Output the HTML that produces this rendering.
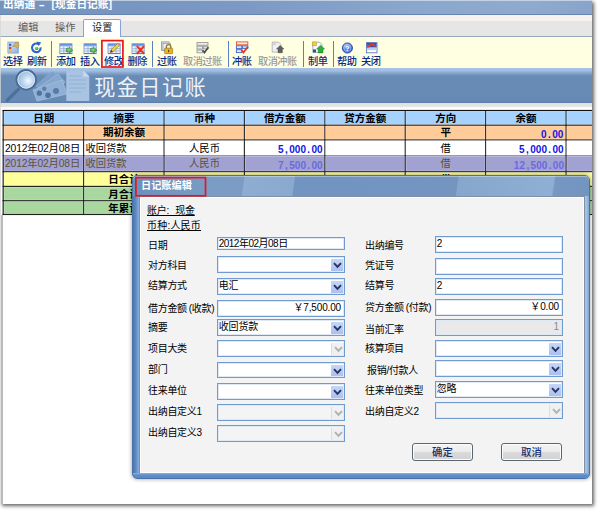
<!DOCTYPE html>
<html lang="zh-CN">
<head>
<meta charset="utf-8">
<title>出纳通 - [现金日记账]</title>
<style>
*{box-sizing:border-box;margin:0;padding:0}
html,body{width:600px;height:512px;background:#fff;overflow:hidden}
body{position:relative;font-family:"Liberation Sans","Noto Sans CJK SC",sans-serif;font-size:10.7px;color:#000;line-height:1}
.abs{position:absolute}
#app{position:absolute;left:0;top:0;width:592px;height:503.5px;background:#fff;overflow:hidden;box-shadow:2px 2px 3.5px rgba(0,0,0,.6)}
#edgeL{left:0;top:15px;width:1.2px;height:489px;background:rgba(215,215,215,.75)}
#edgeL2{left:1px;top:215px;width:2px;height:289px;background:linear-gradient(90deg,#c4c4c4,#aeaeae 50%,#c8c8c8)}
#title{left:0;top:0;width:593px;height:15px;background:linear-gradient(90deg,#7493bd 0%,#7b99c2 40%,#8aa7cd 70%,#8faace 90%,#88a4ca 100%);border-bottom:1px solid #6684b0;box-shadow:inset 0 1px 0 rgba(235,238,242,.6)}
#title span{position:absolute;top:-.7px;color:#fff;font-weight:bold;font-size:10.7px;white-space:nowrap}
#band{left:0;top:15px;width:593px;height:6px;background:#f6f2ef}
#menu{left:0;top:20.6px;width:593px;height:16.4px;background:#e6e6e6;border-bottom:1px solid #9aa7b8}
.mi{position:absolute;top:23.2px;font-size:10.2px;color:#5a5a5a;white-space:nowrap}
#tab{left:83px;top:19px;width:38px;height:18px;background:#fff;border:1.3px solid #86a2d6;border-bottom:none;border-radius:2px 2px 0 0}
#tool{left:0;top:37px;width:593px;height:31px;background:#ffffe1}
.tl{position:absolute;top:57px;font-size:10.2px;color:#0a2a8a;white-space:nowrap;letter-spacing:-.5px;font-weight:500}
.tl.dis{color:#9a9a9a}
.sep{position:absolute;top:41px;width:1px;height:26px;background:#5a7fc0}
.ic{position:absolute;top:41px}

#banner{left:0;top:68px;width:593px;height:35px;background:linear-gradient(180deg,#aac4e6 0,#a0bce0 3px,#7b9cc4 6px,#688cb5 8px,#668ab3 33px,#5a7fab 35px)}
#banner .t{position:absolute;left:94.2px;top:9px;font-size:21.2px;color:#edf2f9;white-space:nowrap;letter-spacing:1.4px}
#gap{left:0;top:103px;width:593px;height:7px;background:linear-gradient(180deg,#e0e0e0 0,#e6e6e6 4px,#fdfdfd 4.6px,#fff 7px)}
.row{position:absolute;left:3px;width:590px}
.c{position:absolute;top:0;height:14px;font-size:10.3px;white-space:nowrap;line-height:13.5px}
.ctr{text-align:center}
.lf{padding-left:1px}
.rt{text-align:right;color:#1414e6}
.rt span{position:absolute;right:2px;top:1.8px;display:block;transform:scaleX(.88);transform-origin:100% 50%;font-family:"Liberation Sans",sans-serif;font-size:11.4px;font-weight:bold;letter-spacing:0}
.rt i{display:inline-block;width:6.34px;text-align:center;font-style:normal}
.b{font-weight:bold;font-size:10.5px}
.dt{letter-spacing:-.15px}
#tblbot{left:3px;top:215px;width:590px;height:1px;background:#000}
/* dialog */
#dlg{left:132px;top:175px;width:457.5px;height:304px;border-radius:5px;background:linear-gradient(90deg,#4a78b4 0,#5b8bc5 3px,#7ba3d4 5px,#8fb0d8 6px,#8fb0d8 445px,#a9c5e6 453px,#7fa4d3 456px);border:1px solid #4a72a8;box-shadow:0 0 4px rgba(0,0,0,.4)}
#dlgbot{left:0;top:297px;width:455.5px;height:5px;border-radius:0 0 4px 4px;background:linear-gradient(180deg,#8fb3dc 0,#5f8fca 2px,#5a8ac4 4px,#4f9a9a 5px)}
#dlgtitle{left:0;top:0;width:455.5px;height:20px;border-radius:4px 4px 0 0;background:linear-gradient(98deg,#6c8fba 0,#7a9bc3 73px,#7c9cc4 110px,#8fadd1 111px,#8aa9ce 160px,#7194c0 161px,#7495c0 322px,#86a6cc 323px,#8fb0d4 417px,#7697c2 419px,#7294bf 457px);box-shadow:inset 0 1px 0 rgba(255,255,255,.35)}
#dlgtitle span{position:absolute;left:8px;top:5px;color:#fff;font-weight:bold;font-size:10.2px;white-space:nowrap}
#dlgbody{left:5.5px;top:20px;width:446px;height:277.5px;background:#f3f3f3;border:1px solid #7f8fa6;box-shadow:inset 0 0 0 1px #fff}

.lb{position:absolute;font-size:10px;white-space:nowrap;color:#000;letter-spacing:-.3px;margin-top:1.2px}
.u{text-decoration:underline;text-underline-offset:1px;text-decoration-thickness:.9px}
.in{position:absolute;background:#fff;border:1px solid #6f9bd1;box-shadow:inset 0 0 0 1px #dfe9f6;font-size:10px;letter-spacing:-.15px;white-space:nowrap;overflow:hidden}
.in.dis{background:#e9e9e9;color:#8a8a8a}
.in.cdis{background:#f4f4f4}
.in span{position:absolute;top:2px}
.dd{position:absolute;right:1px;top:1.5px;bottom:1.5px;width:12px;background:linear-gradient(180deg,#c6d6f8,#a9c0f1);border-left:none}
.dd.g{background:#f0f0f0;border-left:1px solid #ddd}
.dd svg{position:absolute;left:1.5px;top:3.5px}
.btn{position:absolute;height:18px;width:61px;border:1px solid #5c6670;border-radius:3px;background:linear-gradient(180deg,#f5f5f5 0%,#ebebeb 48%,#dadada 52%,#d2d2d2 100%);box-shadow:inset 0 0 0 1px #fbfcfd;font-size:10.4px;font-weight:500;text-align:center;line-height:17.6px;color:#1a2f6a}
</style>
</head>
<body>
<div id="app">
<div id="title" class="abs"><span style="left:3px">出纳通</span><span style="left:40.3px;transform:scaleX(1.7)">-</span><span style="left:51.5px">[现金日记账]</span></div>
<div id="band" class="abs"></div><div id="menu" class="abs"></div><div id="tab" class="abs"></div>
<span class="mi" style="left:18px">编辑</span><span class="mi" style="left:55px">操作</span><span class="mi" style="left:92px;color:#222">设置</span>
<div id="tool" class="abs"></div>
<div class="abs" style="left:103px;top:41.5px;width:19px;height:25px;background:#fff"></div>
<span class="tl" style="left:3px">选择</span>
<span class="tl" style="left:27px">刷新</span>
<span class="tl" style="left:56px">添加</span>
<span class="tl" style="left:80px">插入</span>
<span class="tl" style="left:104px">修改</span>
<span class="tl" style="left:127.5px">删除</span>
<span class="tl" style="left:157px">过账</span>
<span class="tl dis" style="left:183px">取消过账</span>
<span class="tl" style="left:232px">冲账</span>
<span class="tl dis" style="left:258px">取消冲账</span>
<span class="tl" style="left:308px">制单</span>
<span class="tl" style="left:337px">帮助</span>
<span class="tl" style="left:361px">关闭</span>
<svg class="abs" style="left:0;top:37px" width="400" height="31" viewBox="0 37 400 31"><defs><linearGradient id="hd" x1="0" y1="0" x2="0" y2="1"><stop offset="0" stop-color="#4f86e0"/><stop offset="1" stop-color="#8fb6f2"/></linearGradient><linearGradient id="pn" x1="0" y1="0" x2="1" y2="1"><stop offset="0" stop-color="#dce9fb"/><stop offset="1" stop-color="#8caee6"/></linearGradient><radialGradient id="gb" cx=".4" cy=".35" r=".7"><stop offset="0" stop-color="#8fe08f"/><stop offset="1" stop-color="#1f8a2a"/></radialGradient><radialGradient id="hp" cx=".4" cy=".3" r=".8"><stop offset="0" stop-color="#9fc0ff"/><stop offset=".6" stop-color="#3f70e0"/><stop offset="1" stop-color="#1f45b0"/></radialGradient></defs><rect x="7.9" y="42.1" width="10.4" height="11" fill="url(#pn)" stroke="#7f9fd6" stroke-width=".8"/><rect x="9" y="43.6" width="2.3" height="2.3" fill="#3f5fe0"/><rect x="9" y="46.9" width="2.3" height="2.3" fill="#e0402e"/><rect x="9" y="50.2" width="2.3" height="2.3" fill="#e8c020"/><path d="M12.6 46.5l3.2-4.2 2.6.4.6 3.2-1.6 2.6-1.4-2z" fill="#d8b060" stroke="#a88434" stroke-width=".5"/><path d="M38.6 44.2a4.3 4.3 0 1 0 2 3.2" fill="none" stroke="#2f62d6" stroke-width="2.1"/><path d="M36.6 41.4l4.6 1.2-2.6 3.6z" fill="#2f62d6"/><circle cx="36.6" cy="48.4" r="1.7" fill="url(#gb)"/><g transform="translate(59.4 43.4)"><rect x="0.4" y="0.4" width="12.2" height="9.6" fill="#eef2fa" stroke="#6a8fd0" stroke-width=".8"/><rect x="0.4" y="0.4" width="12.2" height="2.6" fill="url(#hd)"/><path d="M0.8 5.3h11.6M0.8 7.6h11.6M4.4 3v7M8.4 3v7" stroke="#8fa8d4" stroke-width=".8"/><path d="M0.4 10.2h12.4" stroke="#5575b0" stroke-width=".9"/></g><path d="M66.2 48.6h3v-1.8l3.6 3.4-3.6 3.4v-1.8h-3z" fill="url(#gb)" stroke="#2a7a30" stroke-width=".5"/><g transform="translate(83.6 43.4)"><rect x="0.4" y="0.4" width="12.2" height="9.6" fill="#eef2fa" stroke="#6a8fd0" stroke-width=".8"/><rect x="0.4" y="0.4" width="12.2" height="2.6" fill="url(#hd)"/><path d="M0.8 5.3h11.6M0.8 7.6h11.6M4.4 3v7M8.4 3v7" stroke="#8fa8d4" stroke-width=".8"/><path d="M0.4 10.2h12.4" stroke="#5575b0" stroke-width=".9"/></g><path d="M90.4 48.6h3v-1.8l3.6 3.4-3.6 3.4v-1.8h-3z" fill="url(#gb)" stroke="#2a7a30" stroke-width=".5"/><g transform="translate(107.6 43.4)"><rect x="0.4" y="0.4" width="12.2" height="9.6" fill="#eef2fa" stroke="#6a8fd0" stroke-width=".8"/><rect x="0.4" y="0.4" width="12.2" height="2.6" fill="url(#hd)"/><path d="M0.8 5.3h11.6M0.8 7.6h11.6M4.4 3v7M8.4 3v7" stroke="#8fa8d4" stroke-width=".8"/><path d="M0.4 10.2h12.4" stroke="#5575b0" stroke-width=".9"/></g><path d="M110.2 52.6l.9-2.8 6.6-6.2 1.9 1.9-6.6 6.2z" fill="#f2d23c" stroke="#8a6a18" stroke-width=".5"/><path d="M117.7 43.6l.9-.8 1.9 1.9-.9.8z" fill="#e88a6a"/><path d="M110.2 52.6l.9-2.8 1.9 1.9z" fill="#40382a"/><g transform="translate(131.6 43.4)"><rect x="0.4" y="0.4" width="12.2" height="9.6" fill="#eef2fa" stroke="#6a8fd0" stroke-width=".8"/><rect x="0.4" y="0.4" width="12.2" height="2.6" fill="url(#hd)"/><path d="M0.8 5.3h11.6M0.8 7.6h11.6M4.4 3v7M8.4 3v7" stroke="#8fa8d4" stroke-width=".8"/><path d="M0.4 10.2h12.4" stroke="#5575b0" stroke-width=".9"/></g><path d="M137.4 46.6l6.2 6.6M143.6 46.6l-6.2 6.6" stroke="#ee3020" stroke-width="2" stroke-linecap="round"/><rect x="161.4" y="41.9" width="7.6" height="8.4" fill="#dfe5f2" stroke="#8090b4" stroke-width=".8"/><rect x="163" y="43.3" width="7.6" height="7" fill="#edf1f8" stroke="#8090b4" stroke-width=".7"/><path d="M166.3 48.6v-1.7a2.3 2.3 0 0 1 4.6 0v1.7" fill="none" stroke="#9a7a20" stroke-width="1.3"/><rect x="164.6" y="48.2" width="8" height="5.5" rx=".7" fill="#ecb422" stroke="#8a6a10" stroke-width=".6"/><rect x="168.1" y="49.8" width="1.1" height="2.3" fill="#5a4008"/><rect x="197" y="42.4" width="11" height="2.8" fill="#ececec" stroke="#8e8e8e" stroke-width=".8"/><rect x="197" y="46.2" width="5.4" height="2.8" fill="#ececec" stroke="#8e8e8e" stroke-width=".8"/><rect x="203.2" y="46.2" width="4.8" height="2.8" fill="#dcdcdc" stroke="#8e8e8e" stroke-width=".8"/><rect x="197" y="50" width="5.4" height="2.8" fill="#ececec" stroke="#8e8e8e" stroke-width=".8"/><path d="M202.6 50.2l1.8 2.4 4-5.4" fill="none" stroke="#4a4a4a" stroke-width="1.6"/><rect x="236.4" y="41.9" width="11.4" height="2.9" fill="#fdeee8" stroke="#e0502e" stroke-width=".9"/><rect x="236.4" y="45.8" width="5.4" height="2.8" fill="#e6eefc" stroke="#3f66c8" stroke-width=".9"/><rect x="242.6" y="45.8" width="5.2" height="2.8" fill="#cfdcf6" stroke="#3f66c8" stroke-width=".9"/><rect x="236.4" y="49.7" width="5.4" height="2.9" fill="#e6eefc" stroke="#3f66c8" stroke-width=".9"/><path d="M241.4 49.8l2 2.8 4.6-6" fill="none" stroke="#e8381e" stroke-width="1.8"/><path d="M272.2 42.1h6.4l2.4 2.4v7.6h-8.8z" fill="#f0f0f0" stroke="#a8a8a8" stroke-width=".8"/><rect x="273" y="42.8" width="3" height="2.4" fill="#d4d4d4"/><path d="M280.2 45.4l3.8 3.6h-1.6v3.8h-4.4v-3.8h-1.6z" fill="#5e5e5e" stroke="#444" stroke-width=".4"/><path d="M312.8 42.2h7l2.2 2.2v8h-9.2z" fill="#f7f9fd" stroke="#8aa0c8" stroke-width=".8"/><rect x="312.6" y="42" width="3.8" height="3.8" fill="#f0d040" stroke="#b89820" stroke-width=".5"/><rect x="313" y="49.4" width="3" height="3" fill="#2f4f9a"/><path d="M320.6 45.2l4 3.8h-1.6v3.9h-4.8v-3.9h-1.6z" fill="#2fae3a" stroke="#1a7a22" stroke-width=".5"/><circle cx="347.4" cy="48" r="5.1" fill="url(#hp)" stroke="#1f3f9f" stroke-width=".8"/><circle cx="347.4" cy="48" r="3.6" fill="none" stroke="#dfe9ff" stroke-width=".7" opacity=".7"/><text x="347.4" y="50.9" font-size="7.6" font-weight="bold" text-anchor="middle" fill="#fff" font-family="Liberation Sans,sans-serif">?</text><rect x="366.4" y="42.6" width="10.6" height="10.2" fill="#fff" stroke="#4a68b4" stroke-width=".8"/><rect x="366.8" y="43" width="9.8" height="4.6" fill="#3454b4"/><rect x="366.8" y="47.6" width="9.8" height="2.6" fill="#b4d0f4"/><path d="M368.6 46.6c1.4-2.6 4.8-2.8 6.6-.4" fill="none" stroke="#ee3a24" stroke-width="1.7"/><path d="M366.8 44.2l.6 3.8 3.2-1.6z" fill="#ee3a24"/></svg>
<div class="sep" style="left:50.6px"></div>
<div class="sep" style="left:152.2px"></div>
<div class="sep" style="left:227.5px"></div>
<div class="sep" style="left:303.2px"></div>
<div class="sep" style="left:332.5px"></div>
<svg class="abs" style="left:99px;top:37px" width="28" height="34" viewBox="99 37 28 34"><rect x="101.9" y="40.6" width="21" height="26.4" fill="none" stroke="#ea1420" stroke-width="1.7"/></svg>
<div id="banner" class="abs">
<svg class="abs" style="left:0;top:0" width="95" height="35" viewBox="0 68 95 35"><defs><radialGradient id="gl" cx=".6" cy=".55" r=".6"><stop offset="0" stop-color="#f4f9ff"/><stop offset=".5" stop-color="#b9d3ee"/><stop offset="1" stop-color="#8fb2d8"/></radialGradient></defs><g><path d="M36 86L52 71l8 6-14 16z" fill="#7da0c8" stroke="#93b3d6" stroke-width=".7"/><path d="M38 88L58 74l7 8-18 14z" fill="#86a8ce" stroke="#9dbbdc" stroke-width=".7"/><path d="M33 90L62 80l5 14-30 7z" fill="#8fb0d4" stroke="#a6c2e0" stroke-width=".7"/><circle cx="39.3" cy="93.2" r="2.6" fill="#4f739f"/><circle cx="48" cy="95.3" r="2.8" fill="#4f739f"/><circle cx="44.3" cy="88.8" r="2.2" fill="#5d81ab"/><circle cx="56" cy="91" r="3" fill="#587ca8"/><path d="M66.3 70.5h17l6 6v24.5h-23z" fill="#a9c4e2"/><path d="M83.3 70.5v6h6z" fill="#c9dbee"/><path d="M69 76h12M69 80h17M69 84h17M69 88h17M69 92h12" stroke="#8fb0d4" stroke-width="1.2"/></g><path d="M18.4 89.4L7.2 100.4" stroke="#4d6f98" stroke-width="3.2" stroke-linecap="round"/><circle cx="26.2" cy="79.8" r="9.8" fill="url(#gl)" stroke="#486a93" stroke-width="1.8"/><circle cx="26.2" cy="79.8" r="8.3" fill="none" stroke="#dbe8f5" stroke-width=".9"/></svg>
<span class="t">现金日记账</span></div>
<div id="gap" class="abs"></div>
<svg class="abs" style="left:0;top:0" width="593" height="230" viewBox="0 0 593 230"><rect x="3" y="110.00" width="591" height="15.20" fill="#a6d2ff"/><rect x="3" y="124.70" width="591" height="15.20" fill="#ffcc99"/><rect x="3" y="139.40" width="591" height="16.20" fill="#ffffff"/><rect x="3" y="155.10" width="591" height="16.60" fill="#a2a2d2"/><rect x="3" y="171.20" width="591" height="15.20" fill="#ffff99"/><rect x="3" y="185.90" width="591" height="14.80" fill="#a8d8a0"/><rect x="3" y="200.20" width="591" height="14.30" fill="#a8d8a0"/><rect x="2.6" y="109.90" width="591" height="1.15" fill="#111"/><rect x="2.6" y="124.60" width="591" height="1.15" fill="#111"/><rect x="2.6" y="139.30" width="591" height="1.15" fill="#111"/><rect x="2.6" y="155.00" width="591" height="1.15" fill="#8a8ac0"/><rect x="2.6" y="171.10" width="591" height="1.15" fill="#111"/><rect x="2.6" y="185.80" width="591" height="1.15" fill="#111"/><rect x="2.6" y="200.10" width="591" height="1.15" fill="#111"/><rect x="2.6" y="213.90" width="591" height="1.15" fill="#111"/><rect x="2.60" y="110" width="1.15" height="105.00" fill="#111"/><rect x="83.00" y="110" width="1.15" height="105.00" fill="#111"/><rect x="163.40" y="110" width="1.15" height="105.00" fill="#111"/><rect x="243.80" y="110" width="1.15" height="105.00" fill="#111"/><rect x="324.20" y="110" width="1.15" height="105.00" fill="#111"/><rect x="404.60" y="110" width="1.15" height="105.00" fill="#111"/><rect x="485.00" y="110" width="1.15" height="105.00" fill="#111"/><rect x="565.40" y="110" width="1.15" height="105.00" fill="#111"/><rect x="4.10" y="111.40" width="79.00" height="13.10" fill="none" stroke="#fff" stroke-opacity=".3" stroke-width=".8"/><rect x="84.50" y="111.40" width="79.00" height="13.10" fill="none" stroke="#fff" stroke-opacity=".3" stroke-width=".8"/><rect x="164.90" y="111.40" width="79.00" height="13.10" fill="none" stroke="#fff" stroke-opacity=".3" stroke-width=".8"/><rect x="245.30" y="111.40" width="79.00" height="13.10" fill="none" stroke="#fff" stroke-opacity=".3" stroke-width=".8"/><rect x="325.70" y="111.40" width="79.00" height="13.10" fill="none" stroke="#fff" stroke-opacity=".3" stroke-width=".8"/><rect x="406.10" y="111.40" width="79.00" height="13.10" fill="none" stroke="#fff" stroke-opacity=".3" stroke-width=".8"/><rect x="486.50" y="111.40" width="79.00" height="13.10" fill="none" stroke="#fff" stroke-opacity=".3" stroke-width=".8"/><rect x="566.90" y="111.40" width="26.80" height="13.10" fill="none" stroke="#fff" stroke-opacity=".3" stroke-width=".8"/><rect x="4.10" y="126.10" width="79.00" height="13.10" fill="none" stroke="#fff" stroke-opacity=".3" stroke-width=".8"/><rect x="84.50" y="126.10" width="79.00" height="13.10" fill="none" stroke="#fff" stroke-opacity=".3" stroke-width=".8"/><rect x="164.90" y="126.10" width="79.00" height="13.10" fill="none" stroke="#fff" stroke-opacity=".3" stroke-width=".8"/><rect x="245.30" y="126.10" width="79.00" height="13.10" fill="none" stroke="#fff" stroke-opacity=".3" stroke-width=".8"/><rect x="325.70" y="126.10" width="79.00" height="13.10" fill="none" stroke="#fff" stroke-opacity=".3" stroke-width=".8"/><rect x="406.10" y="126.10" width="79.00" height="13.10" fill="none" stroke="#fff" stroke-opacity=".3" stroke-width=".8"/><rect x="486.50" y="126.10" width="79.00" height="13.10" fill="none" stroke="#fff" stroke-opacity=".3" stroke-width=".8"/><rect x="566.90" y="126.10" width="26.80" height="13.10" fill="none" stroke="#fff" stroke-opacity=".3" stroke-width=".8"/><rect x="4.10" y="140.80" width="79.00" height="14.10" fill="none" stroke="#fff" stroke-opacity=".3" stroke-width=".8"/><rect x="84.50" y="140.80" width="79.00" height="14.10" fill="none" stroke="#fff" stroke-opacity=".3" stroke-width=".8"/><rect x="164.90" y="140.80" width="79.00" height="14.10" fill="none" stroke="#fff" stroke-opacity=".3" stroke-width=".8"/><rect x="245.30" y="140.80" width="79.00" height="14.10" fill="none" stroke="#fff" stroke-opacity=".3" stroke-width=".8"/><rect x="325.70" y="140.80" width="79.00" height="14.10" fill="none" stroke="#fff" stroke-opacity=".3" stroke-width=".8"/><rect x="406.10" y="140.80" width="79.00" height="14.10" fill="none" stroke="#fff" stroke-opacity=".3" stroke-width=".8"/><rect x="486.50" y="140.80" width="79.00" height="14.10" fill="none" stroke="#fff" stroke-opacity=".3" stroke-width=".8"/><rect x="566.90" y="140.80" width="26.80" height="14.10" fill="none" stroke="#fff" stroke-opacity=".3" stroke-width=".8"/><rect x="4.10" y="156.50" width="79.00" height="14.50" fill="none" stroke="#fff" stroke-opacity=".3" stroke-width=".8"/><rect x="84.50" y="156.50" width="79.00" height="14.50" fill="none" stroke="#fff" stroke-opacity=".3" stroke-width=".8"/><rect x="164.90" y="156.50" width="79.00" height="14.50" fill="none" stroke="#fff" stroke-opacity=".3" stroke-width=".8"/><rect x="245.30" y="156.50" width="79.00" height="14.50" fill="none" stroke="#fff" stroke-opacity=".3" stroke-width=".8"/><rect x="325.70" y="156.50" width="79.00" height="14.50" fill="none" stroke="#fff" stroke-opacity=".3" stroke-width=".8"/><rect x="406.10" y="156.50" width="79.00" height="14.50" fill="none" stroke="#fff" stroke-opacity=".3" stroke-width=".8"/><rect x="486.50" y="156.50" width="79.00" height="14.50" fill="none" stroke="#fff" stroke-opacity=".3" stroke-width=".8"/><rect x="566.90" y="156.50" width="26.80" height="14.50" fill="none" stroke="#fff" stroke-opacity=".3" stroke-width=".8"/><rect x="4.10" y="172.60" width="79.00" height="13.10" fill="none" stroke="#fff" stroke-opacity=".3" stroke-width=".8"/><rect x="84.50" y="172.60" width="79.00" height="13.10" fill="none" stroke="#fff" stroke-opacity=".3" stroke-width=".8"/><rect x="164.90" y="172.60" width="79.00" height="13.10" fill="none" stroke="#fff" stroke-opacity=".3" stroke-width=".8"/><rect x="245.30" y="172.60" width="79.00" height="13.10" fill="none" stroke="#fff" stroke-opacity=".3" stroke-width=".8"/><rect x="325.70" y="172.60" width="79.00" height="13.10" fill="none" stroke="#fff" stroke-opacity=".3" stroke-width=".8"/><rect x="406.10" y="172.60" width="79.00" height="13.10" fill="none" stroke="#fff" stroke-opacity=".3" stroke-width=".8"/><rect x="486.50" y="172.60" width="79.00" height="13.10" fill="none" stroke="#fff" stroke-opacity=".3" stroke-width=".8"/><rect x="566.90" y="172.60" width="26.80" height="13.10" fill="none" stroke="#fff" stroke-opacity=".3" stroke-width=".8"/><rect x="4.10" y="187.30" width="79.00" height="12.70" fill="none" stroke="#fff" stroke-opacity=".3" stroke-width=".8"/><rect x="84.50" y="187.30" width="79.00" height="12.70" fill="none" stroke="#fff" stroke-opacity=".3" stroke-width=".8"/><rect x="164.90" y="187.30" width="79.00" height="12.70" fill="none" stroke="#fff" stroke-opacity=".3" stroke-width=".8"/><rect x="245.30" y="187.30" width="79.00" height="12.70" fill="none" stroke="#fff" stroke-opacity=".3" stroke-width=".8"/><rect x="325.70" y="187.30" width="79.00" height="12.70" fill="none" stroke="#fff" stroke-opacity=".3" stroke-width=".8"/><rect x="406.10" y="187.30" width="79.00" height="12.70" fill="none" stroke="#fff" stroke-opacity=".3" stroke-width=".8"/><rect x="486.50" y="187.30" width="79.00" height="12.70" fill="none" stroke="#fff" stroke-opacity=".3" stroke-width=".8"/><rect x="566.90" y="187.30" width="26.80" height="12.70" fill="none" stroke="#fff" stroke-opacity=".3" stroke-width=".8"/><rect x="4.10" y="201.60" width="79.00" height="12.20" fill="none" stroke="#fff" stroke-opacity=".3" stroke-width=".8"/><rect x="84.50" y="201.60" width="79.00" height="12.20" fill="none" stroke="#fff" stroke-opacity=".3" stroke-width=".8"/><rect x="164.90" y="201.60" width="79.00" height="12.20" fill="none" stroke="#fff" stroke-opacity=".3" stroke-width=".8"/><rect x="245.30" y="201.60" width="79.00" height="12.20" fill="none" stroke="#fff" stroke-opacity=".3" stroke-width=".8"/><rect x="325.70" y="201.60" width="79.00" height="12.20" fill="none" stroke="#fff" stroke-opacity=".3" stroke-width=".8"/><rect x="406.10" y="201.60" width="79.00" height="12.20" fill="none" stroke="#fff" stroke-opacity=".3" stroke-width=".8"/><rect x="486.50" y="201.60" width="79.00" height="12.20" fill="none" stroke="#fff" stroke-opacity=".3" stroke-width=".8"/><rect x="566.90" y="201.60" width="26.80" height="12.20" fill="none" stroke="#fff" stroke-opacity=".3" stroke-width=".8"/></svg>
<div class="row" style="top:112.20px;height:13.70px;color:#000"><div class="c ctr b" style="left:1.00px;width:79.40px;">日期</div><div class="c ctr b" style="left:81.40px;width:79.40px;">摘要</div><div class="c ctr b" style="left:161.80px;width:79.40px;">币种</div><div class="c ctr b" style="left:242.20px;width:79.40px;">借方金额</div><div class="c ctr b" style="left:322.60px;width:79.40px;">贷方金额</div><div class="c ctr b" style="left:403.00px;width:79.40px;">方向</div><div class="c ctr b" style="left:483.40px;width:79.40px;">余额</div></div>
<div class="row" style="top:126.10px;height:13.70px;color:#000"><div class="c ctr b" style="left:81.40px;width:79.40px;">期初余额</div><div class="c ctr b" style="left:403.00px;width:79.40px;">平</div><div class="c rt" style="left:483.40px;width:79.40px;"><span>0<i>.</i>00</span></div></div>
<div class="row" style="top:141.60px;height:14.70px;color:#000"><div class="c lf dt" style="left:1.00px;width:79.40px;">2012年02月08日</div><div class="c lf" style="left:81.40px;width:79.40px;">收回货款</div><div class="c ctr" style="left:161.80px;width:79.40px;">人民币</div><div class="c rt" style="left:242.20px;width:79.40px;"><span>5<i>,</i>000<i>.</i>00</span></div><div class="c ctr" style="left:403.00px;width:79.40px;">借</div><div class="c rt" style="left:483.40px;width:79.40px;"><span>5<i>,</i>000<i>.</i>00</span></div></div>
<div class="row" style="top:157.30px;height:15.10px;color:#5a5238"><div class="c lf dt" style="left:1.00px;width:79.40px;">2012年02月08日</div><div class="c lf" style="left:81.40px;width:79.40px;">收回货款</div><div class="c ctr" style="left:161.80px;width:79.40px;">人民币</div><div class="c rt" style="left:242.20px;width:79.40px;color:#6a6ae0;"><span>7<i>,</i>500<i>.</i>00</span></div><div class="c ctr" style="left:403.00px;width:79.40px;">借</div><div class="c rt" style="left:483.40px;width:79.40px;color:#6a6ae0;"><span>12<i>,</i>500<i>.</i>00</span></div></div>
<div class="row" style="top:173.40px;height:13.70px;color:#000"><div class="c ctr b" style="left:81.40px;width:79.40px;">日合计</div><div class="c ctr b" style="left:403.00px;width:79.40px;">借</div></div>
<div class="row" style="top:188.10px;height:13.30px;color:#000"><div class="c ctr b" style="left:81.40px;width:79.40px;">月合计</div><div class="c ctr b" style="left:403.00px;width:79.40px;">借</div></div>
<div class="row" style="top:202.40px;height:12.80px;color:#000"><div class="c ctr b" style="left:81.40px;width:79.40px;">年累计</div><div class="c ctr b" style="left:403.00px;width:79.40px;">借</div></div>
<div id="dlg" class="abs"><div id="dlgtitle" class="abs"><span>日记账编辑</span></div><div id="dlgbody" class="abs"></div><div id="dlgbot" class="abs"></div></div>
<svg class="abs" style="left:133px;top:175px" width="76" height="24" viewBox="133 175 76 24"><rect x="135.9" y="177.6" width="69.6" height="18.2" fill="none" stroke="#ea1420" stroke-width="1.7"/></svg>
<span class="lb u" style="left:147px;top:204.6px;word-spacing:4px">账户: 现金</span>
<span class="lb u" style="left:147px;top:219.8px;letter-spacing:.2px">币种:人民币</span>
<span class="lb" style="left:148px;top:240px">日期</span>
<div class="in " style="left:217px;top:237px;width:128px;height:13px"><span style="left:.7px;top:0.5px"><b style="font-weight:normal;letter-spacing:-.5px">2012年02月08日</b></span></div>
<span class="lb" style="left:148px;top:260px">对方科目</span>
<div class="in " style="left:217px;top:256px;width:128px;height:17px"><div class="dd"><svg width="9" height="7" viewBox="0 0 9 7"><path d="M1 1.2l3.5 3.6L8 1.2" fill="none" stroke="#26335e" stroke-width="1.9"/></svg></div></div>
<span class="lb" style="left:148px;top:280px">结算方式</span>
<div class="in " style="left:217px;top:278px;width:128px;height:17px"><span style="left:.7px;top:2px">电汇</span><div class="dd"><svg width="9" height="7" viewBox="0 0 9 7"><path d="M1 1.2l3.5 3.6L8 1.2" fill="none" stroke="#26335e" stroke-width="1.9"/></svg></div></div>
<span class="lb" style="left:148px;top:303px">借方金额<i style="font-style:normal;margin-left:2px">(收款)</i></span>
<div class="in " style="left:217px;top:300px;width:128px;height:17px"><span style="right:3px">￥7,500.00</span></div>
<span class="lb" style="left:148px;top:322px">摘要</span>
<div class="in " style="left:217px;top:319px;width:128px;height:17px"><span style="left:.7px;top:2px">收回货款</span><div class="dd"><svg width="9" height="7" viewBox="0 0 9 7"><path d="M1 1.2l3.5 3.6L8 1.2" fill="none" stroke="#26335e" stroke-width="1.9"/></svg></div></div>
<span class="lb" style="left:148px;top:343px">项目大类</span>
<div class="in " style="left:217px;top:340px;width:128px;height:17px"><div class="dd g"><svg width="9" height="7" viewBox="0 0 9 7"><path d="M1 1.2l3.5 3.6L8 1.2" fill="none" stroke="#b0b0b0" stroke-width="1.9"/></svg></div></div>
<span class="lb" style="left:148px;top:364px">部门</span>
<div class="in " style="left:217px;top:362px;width:128px;height:16px"><div class="dd"><svg width="9" height="7" viewBox="0 0 9 7"><path d="M1 1.2l3.5 3.6L8 1.2" fill="none" stroke="#26335e" stroke-width="1.9"/></svg></div></div>
<span class="lb" style="left:148px;top:385px">往来单位</span>
<div class="in " style="left:217px;top:383px;width:128px;height:17px"><div class="dd"><svg width="9" height="7" viewBox="0 0 9 7"><path d="M1 1.2l3.5 3.6L8 1.2" fill="none" stroke="#26335e" stroke-width="1.9"/></svg></div></div>
<span class="lb" style="left:148px;top:406px">出纳自定义1</span>
<div class="in cdis" style="left:217px;top:404px;width:128px;height:17px"><div class="dd g"><svg width="9" height="7" viewBox="0 0 9 7"><path d="M1 1.2l3.5 3.6L8 1.2" fill="none" stroke="#b0b0b0" stroke-width="1.9"/></svg></div></div>
<span class="lb" style="left:148px;top:427px">出纳自定义3</span>
<div class="in cdis" style="left:217px;top:425px;width:128px;height:17px"><div class="dd g"><svg width="9" height="7" viewBox="0 0 9 7"><path d="M1 1.2l3.5 3.6L8 1.2" fill="none" stroke="#b0b0b0" stroke-width="1.9"/></svg></div></div>
<span class="lb" style="left:365px;top:240px">出纳编号</span>
<div class="in " style="left:435px;top:236px;width:128px;height:17px"><span style="left:.7px;top:2px">2</span></div>
<span class="lb" style="left:365px;top:260px">凭证号</span>
<div class="in " style="left:435px;top:258px;width:128px;height:17px"></div>
<span class="lb" style="left:365px;top:280px">结算号</span>
<div class="in " style="left:435px;top:278px;width:128px;height:17px"><span style="left:.7px;top:2px">2</span></div>
<span class="lb" style="left:365px;top:302px">贷方金额<i style="font-style:normal;margin-left:2px">(付款)</i></span>
<div class="in " style="left:435px;top:299px;width:128px;height:17px"><span style="right:3px">￥0.00</span></div>
<span class="lb" style="left:365px;top:324px">当前汇率</span>
<div class="in dis" style="left:435px;top:319px;width:128px;height:17px"><span style="right:3px">1</span></div>
<span class="lb" style="left:365px;top:343px">核算项目</span>
<div class="in " style="left:435px;top:340px;width:128px;height:17px"><div class="dd"><svg width="9" height="7" viewBox="0 0 9 7"><path d="M1 1.2l3.5 3.6L8 1.2" fill="none" stroke="#26335e" stroke-width="1.9"/></svg></div></div>
<span class="lb" style="left:367px;top:365px">报销/付款人</span>
<div class="in " style="left:435px;top:360px;width:128px;height:17px"><div class="dd"><svg width="9" height="7" viewBox="0 0 9 7"><path d="M1 1.2l3.5 3.6L8 1.2" fill="none" stroke="#26335e" stroke-width="1.9"/></svg></div></div>
<span class="lb" style="left:365px;top:385px">往来单位类型</span>
<div class="in " style="left:435px;top:381px;width:128px;height:17px"><span style="left:.7px;top:2px">忽略</span><div class="dd"><svg width="9" height="7" viewBox="0 0 9 7"><path d="M1 1.2l3.5 3.6L8 1.2" fill="none" stroke="#26335e" stroke-width="1.9"/></svg></div></div>
<span class="lb" style="left:365px;top:406px">出纳自定义2</span>
<div class="in cdis" style="left:435px;top:402px;width:128px;height:17px"><div class="dd g"><svg width="9" height="7" viewBox="0 0 9 7"><path d="M1 1.2l3.5 3.6L8 1.2" fill="none" stroke="#b0b0b0" stroke-width="1.9"/></svg></div></div>
<div class="btn" style="left:412px;top:443px">确定</div>
<div class="btn" style="left:501px;top:443px">取消</div>
<div id="edgeL" class="abs"></div><div id="edgeL2" class="abs"></div>
</div>
</body>
</html>
